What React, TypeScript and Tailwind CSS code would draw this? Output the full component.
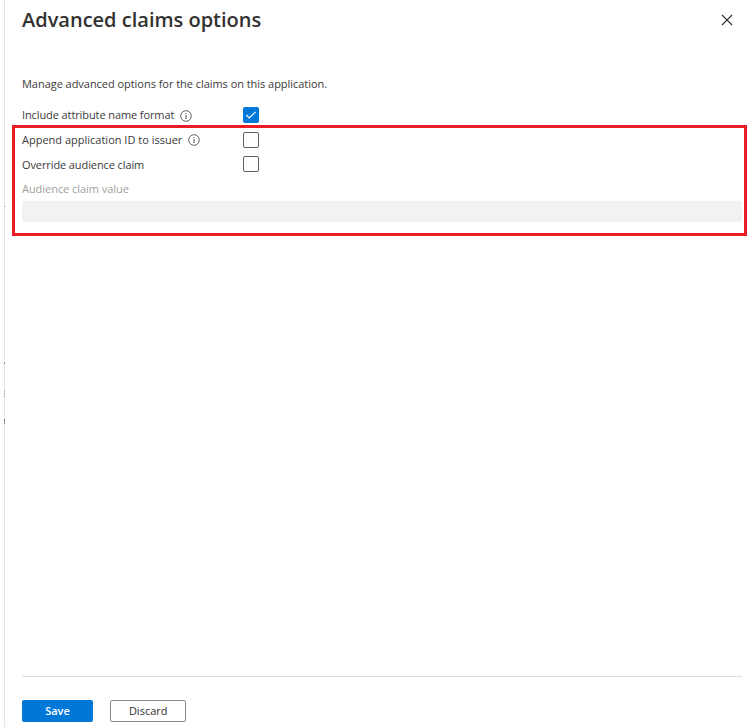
import React from "react";

function InfoIcon() {
  return (
    <svg className="mt-px h-3 w-3 shrink-0" viewBox="0 0 12 12" fill="none" stroke="#4a4847">
      <circle cx="6" cy="6" r="5.3" strokeWidth="0.85" />
      <path d="M6 5v4" strokeWidth="0.95" />
      <path d="M6 3v1.1" strokeWidth="1" />
    </svg>
  );
}

function Checkbox({ checked = false }: { checked?: boolean }) {
  return checked ? (
    <span role="checkbox" aria-checked="true" className="flex h-4 w-4 items-center justify-center rounded-xs bg-[#0078d7]">
      <svg className="h-4 w-4" viewBox="0 0 16 16" fill="none" stroke="white" strokeWidth="1.1">
        <path d="M3.3 8 6.3 11 12.6 4.8" />
      </svg>
    </span>
  ) : (
    <span role="checkbox" aria-checked="false" className="h-4 w-4 rounded-xs border border-[#605e5c] bg-white" />
  );
}

type RowProps = { label: string; spacing: string; info?: boolean; checked?: boolean };

function OptionRow({ label, spacing, info, checked }: RowProps) {
  return (
    <div className="flex h-[24.5px] items-center">
      <div className="flex w-[221px] items-center gap-1.5">
        <span className={`whitespace-nowrap ${spacing}`}>{label}</span>
        {info && <InfoIcon />}
      </div>
      <Checkbox checked={checked} />
    </div>
  );
}

const specks = [
  { top: 206, height: 1, color: "#8a8a8a" },
  { top: 221, height: 1, color: "#c4c4c4" },
  { top: 321, height: 1, color: "#c4c4c4" },
  { top: 349, height: 1, color: "#c4c4c4" },
  { top: 362, height: 2, color: "#8a8a8a" },
  { top: 390, height: 2, color: "#b8b8b8" },
  { top: 393, height: 1, color: "#777777" },
  { top: 395, height: 2, color: "#b0b0b0" },
  { top: 419, height: 2, color: "#777777" },
  { top: 421, height: 3, color: "#8f8f8f" },
  { top: 434, height: 1, color: "#cccccc" },
];

export default function App() {
  return (
    <div className="relative h-[727px] w-[750px] overflow-hidden bg-white pl-1 font-['Open_Sans','Noto_Sans',sans-serif] text-[11px] text-[#3b3a39]">
      <main className="flex h-full flex-col border-l border-[#e6e6e6] pr-[8.5px] pl-[17px]">
        <header className="flex h-10 items-center justify-between pr-[7.5px]">
          <h1 className="text-[20px] leading-10 font-semibold whitespace-nowrap text-[#323130]">Advanced claims options</h1>
          <svg className="mr-px h-3 w-3" viewBox="0 0 12 12" fill="none" stroke="#323130" strokeWidth="1.1">
            <path d="M1 1l10 10M11 1 1 11" />
          </svg>
        </header>

        <p className="mt-[34px] h-[20px] leading-[19px] tracking-[-0.04px] whitespace-nowrap">
          Manage advanced options for the claims on this application.
        </p>

        <section className="mt-[9px]">
          <OptionRow label="Include attribute name format" spacing="tracking-[-0.1px]" info checked />
          <OptionRow label="Append application ID to issuer" spacing="tracking-normal" info />
          <OptionRow label="Override audience claim" spacing="pt-px tracking-[-0.1px]" />
          <div className="flex h-[24.5px] items-center pt-px tracking-[-0.04px] whitespace-nowrap text-[#a19f9d]">Audience claim value</div>
          <div className="h-[21px] rounded-xs bg-[#f3f2f1]" />
        </section>

        <footer className="mt-auto h-[51px] border-t border-[#dcdcdc] pt-[23px]">
          <div className="flex gap-[17px]">
            <button className="h-[22px] w-[71px] rounded-xs bg-[#0078d7] leading-[22px] font-semibold text-white">Save</button>
            <button className="h-[22px] w-[76.4px] rounded-xs border border-[#8a8886] bg-white leading-5 text-[#323130]">Discard</button>
          </div>
        </footer>
      </main>

      {specks.map((s) => (
        <i key={s.top} className="absolute left-1 w-px" style={{ top: s.top, height: s.height, backgroundColor: s.color }} />
      ))}
      <div className="pointer-events-none absolute top-[125px] left-3 h-[111px] w-[735px] border-3 border-[#ed1c24]" />
    </div>
  );
}
